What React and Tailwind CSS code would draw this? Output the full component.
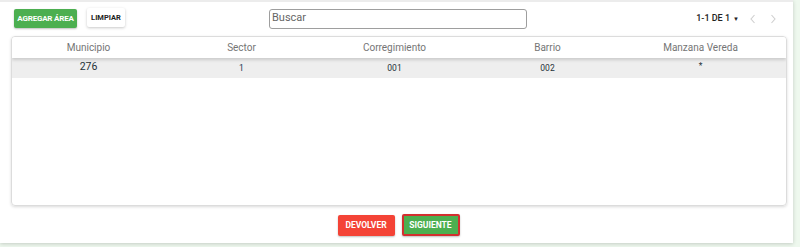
import React from "react";

const cols = ["Municipio", "Sector", "Corregimiento", "Barrio", "Manzana Vereda"];

function Chev({ dir }) {
  return (
    <svg width="10" height="12" viewBox="0 0 10 12" fill="none" stroke="#cfcfcf" strokeWidth="1.1">
      {dir === "l" ? <path d="M6.5 2 L3 6 L6.5 10" /> : <path d="M3.5 2 L7 6 L3.5 10" />}
    </svg>
  );
}

export default function App() {
  return (
    <div className="w-[800px] h-[247px] bg-[#eef8ee] overflow-hidden" style={{ fontFamily: "Roboto, 'Liberation Sans', sans-serif" }}>
      <div className="w-[793px] h-[243px] bg-white border-t-2 border-[#ececec] shadow-[0_1px_4px_rgba(0,0,0,0.18)] flex flex-col">
        <div className="flex items-center h-[30px] pt-[3px] pl-[14px] pr-[15px]">
          <button className="w-[63px] h-[19px] rounded-[2px] bg-[#4caf50] text-white text-[8px] font-bold tracking-[-0.2px] shadow-[0_1px_2px_rgba(0,0,0,0.25)] whitespace-nowrap">AGREGAR ÁREA</button>
          <button className="ml-[10px] w-[38px] h-[19px] rounded-[2px] bg-white text-[#222] text-[7.5px] font-bold shadow-[0_1px_3px_rgba(0,0,0,0.22)] -mt-[2px]">LIMPIAR</button>
          <div className="ml-[144px] w-[258px] h-[20px] border border-[#9e9e9e] rounded-[3px] flex items-center px-[2px] text-[11px] text-[#666]">Buscar</div>
          <div className="ml-auto flex items-center gap-[3px] text-[9px] font-medium text-[#222]">
            <span>1-1 DE 1</span>
            <span className="text-[6px]">▼</span>
          </div>
          <span className="ml-[9px]"><Chev dir="l" /></span>
          <span className="ml-[10px]"><Chev dir="r" /></span>
        </div>
        <div className="ml-[11px] mr-[6px] mt-[4px] h-[170px] border border-[#dcdcdc] rounded-[4px] shadow-[0_1px_3px_rgba(0,0,0,0.15)] overflow-hidden">
          <div className="grid grid-cols-[153px_153px_153px_153px_153px_1fr] h-[21px] items-center shadow-[0_2px_3px_rgba(0,0,0,0.15)] relative bg-white">
            {cols.map((c) => (
              <div key={c} className="text-center text-[10px] text-[#757575]">{c}</div>
            ))}
            <div />
          </div>
          <div className="grid grid-cols-[153px_153px_153px_153px_153px_1fr] h-[20px] items-center bg-[#eeeeee] text-[#263238]">
            <div className="text-center text-[10.5px] -mt-[3px]">276</div>
            <div className="text-center text-[8.5px] text-[#1a3552]">1</div>
            <div className="text-center text-[8.5px]">001</div>
            <div className="text-center text-[8.5px]">002</div>
            <div className="text-center text-[8.5px] -mt-[4px]">*</div>
            <div />
          </div>
        </div>
        <div className="flex justify-center items-center gap-[7px] mt-[8px] pl-[4px]">
          <button className="h-[21px] w-[57px] rounded-[2px] bg-[#f44336] text-white text-[8.5px] font-bold shadow-[0_1px_2px_rgba(0,0,0,0.25)]">DEVOLVER</button>
          <button className="h-[22px] w-[58px] rounded-[2px] bg-[#4caf50] text-white text-[8.5px] font-bold border-2 border-[#d32f2f] shadow-[0_1px_2px_rgba(0,0,0,0.25)]">SIGUIENTE</button>
        </div>
      </div>
    </div>
  );
}
